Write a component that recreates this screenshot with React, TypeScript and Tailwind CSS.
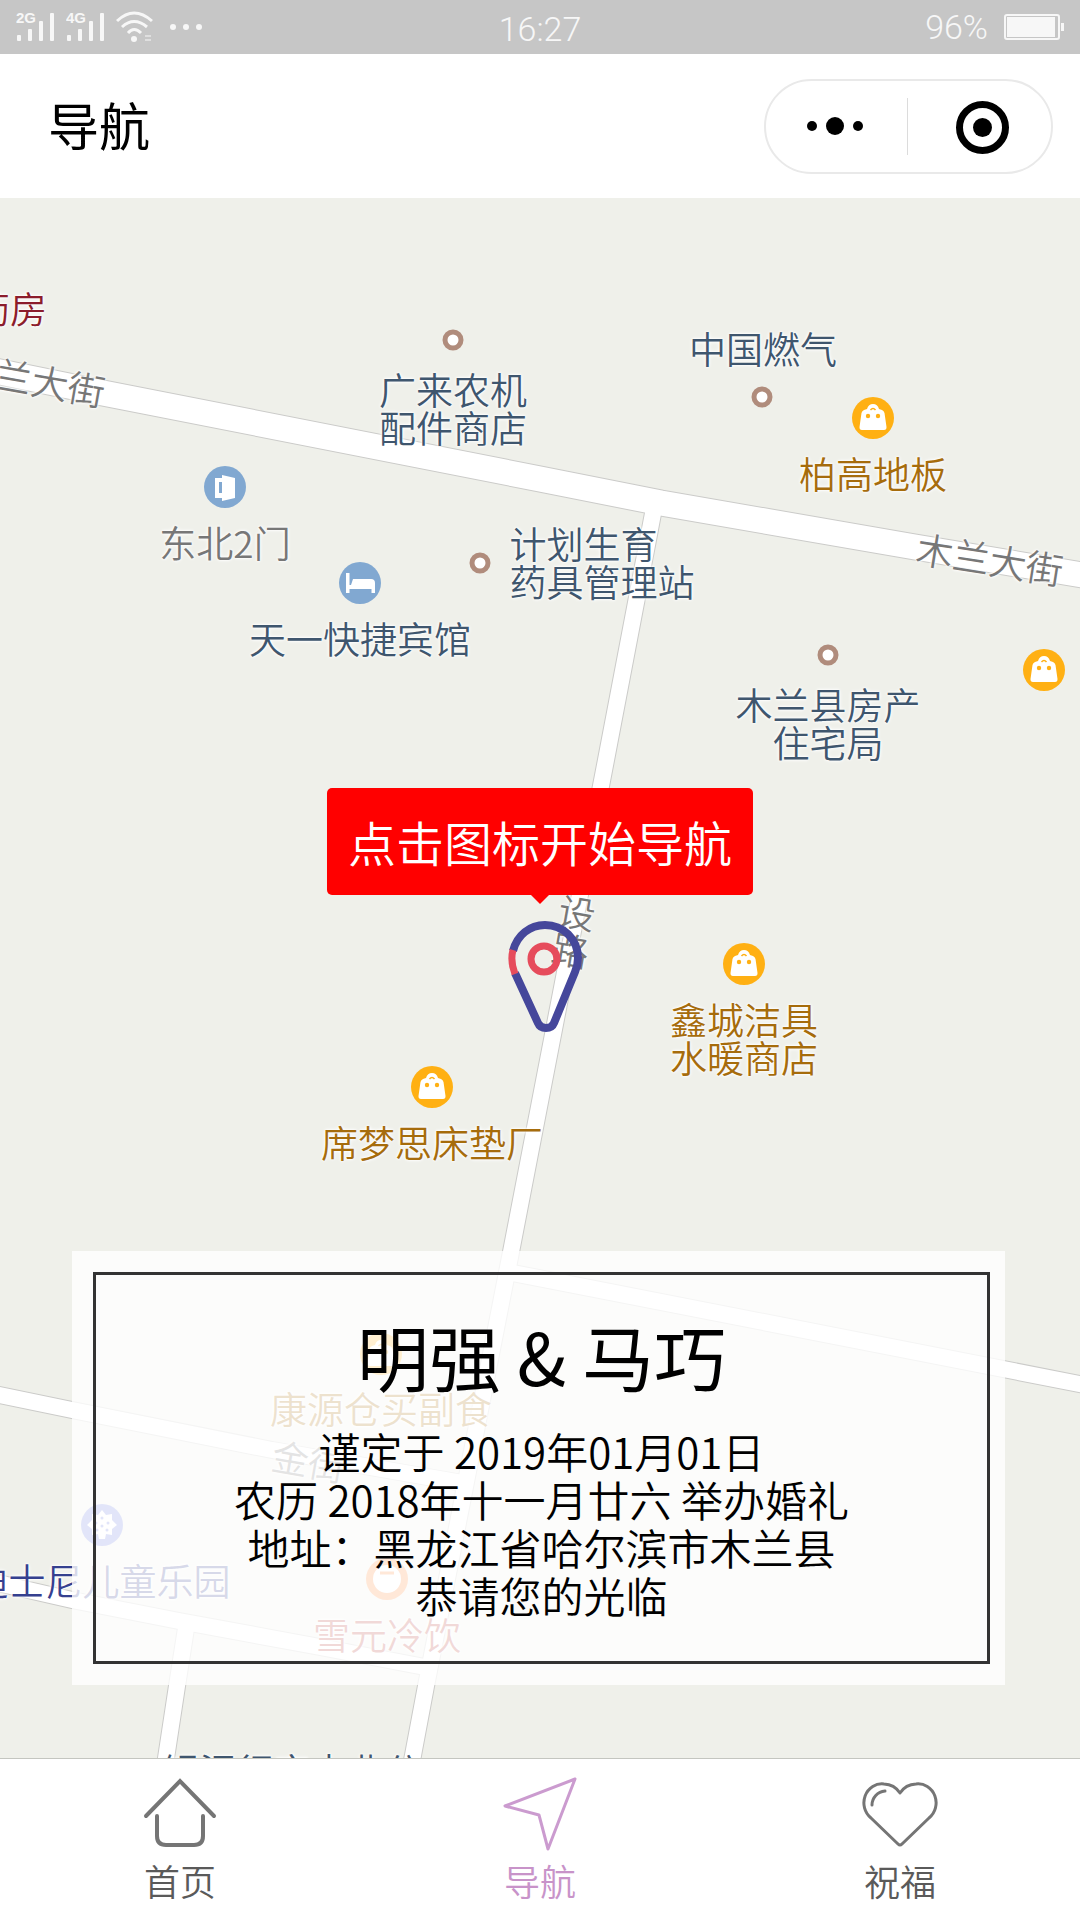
import React from "react";

type Kind = "shop" | "gate" | "hotel" | "dot" | "park" | "food";

const MARKERS: { kind: Kind; x: number; y: number }[] = [
  { kind: "dot", x: 453, y: 142 },
  { kind: "dot", x: 762, y: 199 },
  { kind: "dot", x: 480, y: 365 },
  { kind: "dot", x: 828, y: 457 },
  { kind: "gate", x: 225, y: 289 },
  { kind: "hotel", x: 360, y: 385 },
  { kind: "shop", x: 873, y: 220 },
  { kind: "shop", x: 1044, y: 472 },
  { kind: "shop", x: 744, y: 766 },
  { kind: "shop", x: 432, y: 889 },
  { kind: "shop", x: 381, y: 1156 },
  { kind: "park", x: 102, y: 1327 },
  { kind: "food", x: 387, y: 1381 },
];

const NAVY = "text-[#3f566e]";
const BROWN = "text-[#a66c0c]";
const GRAY = "text-[#777777]";

const LABELS: { lines: string[]; x: number; y: number; color: string; turn?: string; left?: boolean }[] = [
  { lines: ["药房"], x: 10, y: 110, color: "text-[#8c1d2c]" },
  { lines: ["木兰大街"], x: 32, y: 180, color: GRAY, turn: "rotate-10" },
  { lines: ["木兰大街"], x: 990, y: 360, color: GRAY, turn: "rotate-9" },
  { lines: ["广来农机", "配件商店"], x: 453, y: 210, color: NAVY },
  { lines: ["中国燃气"], x: 763, y: 150, color: NAVY },
  { lines: ["柏高地板"], x: 873, y: 275, color: BROWN },
  { lines: ["东北2门"], x: 225, y: 344, color: GRAY },
  { lines: ["计划生育", "药具管理站"], x: 602, y: 364, color: NAVY, left: true },
  { lines: ["天一快捷宾馆"], x: 360, y: 440, color: NAVY },
  { lines: ["木兰县房产", "住宅局"], x: 828, y: 525, color: NAVY },
  { lines: ["设", "路"], x: 574, y: 732, color: GRAY, turn: "rotate-10" },
  { lines: ["鑫城洁具", "水暖商店"], x: 744, y: 840, color: BROWN },
  { lines: ["席梦思床垫厂"], x: 432, y: 944, color: BROWN },
  { lines: ["康源仓买副食"], x: 381, y: 1210, color: BROWN },
  { lines: ["金街"], x: 309, y: 1262, color: GRAY, turn: "rotate-10" },
  { lines: ["迪士尼儿童乐园"], x: 101, y: 1382, color: "text-[#35408f]" },
  { lines: ["雪元冷饮"], x: 387, y: 1436, color: "text-[#b8433c]" },
  { lines: ["银泥行宾中业分"], x: 292, y: 1572, color: NAVY },
];

const ROADS: { d: string; w: number }[] = [
  { d: "M-20 170 L103 195 L540 281 L661 305 L915 349 L1100 380", w: 26 },
  { d: "M655 305 L606 562 L511 1054 L426 1488 L405 1600", w: 17 },
  { d: "M508 1074 L1100 1190", w: 17 },
  { d: "M-20 1193 L72 1212 L272 1252 L468 1286", w: 17 },
  { d: "M-20 1381 L72 1402 L179 1423 L320 1449 L430 1470", w: 17 },
  { d: "M187 1424 L177 1488 L163 1580", w: 17 },
];

function Roads() {
  return (
    <svg className="absolute left-0 top-0" width="1080" height="1600" viewBox="0 0 1080 1600" fill="none" aria-hidden="true">
      {ROADS.map((r) => (
        <path key={r.d} d={r.d} stroke="#cbcbc9" strokeWidth={r.w + 1} />
      ))}
      {ROADS.map((r) => (
        <path key={r.d} d={r.d} stroke="#ffffff" strokeWidth={r.w - 1} />
      ))}
    </svg>
  );
}

function MarkerIcon({ kind }: { kind: Kind }) {
  if (kind === "dot") {
    return (
      <svg width="44" height="44" viewBox="0 0 44 44" aria-hidden="true">
        <circle cx="22" cy="22" r="8" fill="#fff" stroke="#b08c7c" strokeWidth="5" />
      </svg>
    );
  }
  const fill = { shop: "#ffb013", gate: "#81a8d1", hotel: "#81a8d1", park: "#6f7fe0", food: "#ff8a3c" }[kind];
  return (
    <svg width="44" height="44" viewBox="0 0 44 44" aria-hidden="true">
      <circle cx="22" cy="22" r="21" fill={fill} />
      {kind === "shop" && (
        <>
          <path d="M13 14 L16 13 C17 9.500 19 8 22 8 S27 9.500 28 13 L31 14 Q33 15 33.500 17 L35.500 31 Q35.700 34 33 34 H11 Q8.300 34 8.500 31 L10.500 17 Q11 15 13 14 Z" fill="#fff" />
          <path d="M19.500 14 Q22 11 24.500 14" stroke={fill} strokeWidth="1.500" fill="none" />
          <circle cx="17" cy="20" r="2.200" fill={fill} />
          <circle cx="27" cy="20" r="2.200" fill={fill} />
        </>
      )}
      {kind === "gate" && (
        <>
          <path d="M12 13 H19 V10 L32 13 V33 L19 36 V33 H12 Z" fill="#fff" />
          <rect x="16" y="17" width="3" height="11" fill={fill} />
        </>
      )}
      {kind === "hotel" && <path d="M8 12 H11.500 V24 H13 L15 18 H33 Q37 18 37 22 V32 H33.500 V28 H11.500 V32 H8 Z" fill="#fff" />}
      {kind === "park" && (
        <>
          <path d="M22 7 L26 12 L32 11 L32 17 L37 22 L32 26 L32 32 L26 31 L25 36 H19 L18 31 L12 32 L12 26 L7 22 L12 17 L12 11 L18 12 Z" fill="#fff" />
          <g fill={fill}>
            <circle cx="22" cy="15" r="1.500" />
            <circle cx="16" cy="20" r="1.500" />
            <circle cx="28" cy="20" r="1.500" />
            <circle cx="22" cy="23" r="1.500" />
            <circle cx="17" cy="27" r="1.500" />
            <circle cx="27" cy="27" r="1.500" />
          </g>
        </>
      )}
      {kind === "food" && (
        <>
          <circle cx="22" cy="22" r="14" fill="#fff" />
          <path d="M15 16 H29" stroke={fill} strokeWidth="3" />
        </>
      )}
    </svg>
  );
}

function Pin() {
  return (
    <svg width="80" height="116" viewBox="0 0 80 116" fill="none" aria-hidden="true">
      <path d="M7 32 C11 16 24 6 39 6 C57 6 72 20 72 39 Q72 46 69 53 L48 104 Q46 109 40 109 T32 104 L9 54" stroke="#45479b" strokeWidth="8" />
      <path d="M7 31 Q4 42 9 55" stroke="#e64c5c" strokeWidth="7" />
      <circle cx="38" cy="40" r="13" stroke="#e64c5c" strokeWidth="7" />
    </svg>
  );
}

function Signal({ name }: { name: string }) {
  return (
    <svg width="40" height="44" viewBox="0 -6 40 44" aria-label={name}>
      <text x="0" y="12" fontSize="15" fontWeight="700" fontFamily="Liberation Sans, sans-serif" fill="#f7f7f7">
        {name}
      </text>
      <g fill="#f7f7f7">
        <rect x="1" y="24" width="4" height="6" rx="1" />
        <rect x="12" y="18" width="4" height="12" rx="1" />
        <rect x="23" y="10" width="4" height="20" rx="1" />
        <rect x="34" y="2" width="4" height="28" rx="1" />
      </g>
    </svg>
  );
}

function StatusBar() {
  return (
    <div className="grid h-[54px] grid-cols-3 items-center bg-[#c6c6c6] px-4 font-['Roboto','Noto_Sans',sans-serif] text-[34px] leading-none font-light text-[#f7f7f7]">
      <div className="flex items-center gap-[10px]">
        <Signal name="2G" />
        <Signal name="4G" />
        <svg width="38" height="32" viewBox="0 0 38 32" fill="none" stroke="#f7f7f7" strokeWidth="3" aria-hidden="true">
          <path d="M1 10 Q18 -6 36 10" />
          <path d="M6 16 Q18 5 31 16" />
          <path d="M12 22 Q18 15 25 22" />
          <circle cx="18" cy="28" r="3" fill="#f7f7f7" stroke="none" />
          <path d="M29 25 H35 M29 29 H35" strokeWidth="2" opacity="0.5" />
        </svg>
        <div className="flex gap-[7px] pl-[6px]">
          <span className="size-[6px] rounded-full bg-[#f7f7f7]" />
          <span className="size-[6px] rounded-full bg-[#f7f7f7]" />
          <span className="size-[6px] rounded-full bg-[#f7f7f7]" />
        </div>
      </div>
      <div className="pt-1 text-center">16:27</div>
      <div className="flex items-center justify-end gap-4">
        <span>96%</span>
        <svg width="60" height="26" viewBox="0 0 60 26" aria-hidden="true">
          <rect x="1" y="1" width="54" height="24" rx="2" fill="none" stroke="#f7f7f7" strokeWidth="2" />
          <rect x="3" y="3" width="48" height="20" fill="#f7f7f7" />
          <rect x="57" y="9" width="3" height="8" fill="#f7f7f7" />
        </svg>
      </div>
    </div>
  );
}

function Header() {
  return (
    <header className="flex h-[144px] items-center justify-between bg-white pr-[27px] pl-12">
      <h1 className="pb-1 text-[51px] leading-none text-black">导航</h1>
      <div className="flex h-[95px] w-[289px] items-center rounded-full border-2 border-[#e9e9e9]">
        <button type="button" aria-label="更多" className="flex h-full w-[141px] items-center justify-center gap-[9px] pr-[3px]">
          <span className="size-[10px] rounded-full bg-black" />
          <span className="size-[18px] rounded-full bg-black" />
          <span className="size-[10px] rounded-full bg-black" />
        </button>
        <span className="h-[57px] w-px bg-[#dcdcdc]" />
        <button type="button" aria-label="关闭" className="flex h-full flex-1 items-center justify-center pt-[2px] pl-[6px]">
          <span className="flex size-[53px] items-center justify-center rounded-full border-[7px] border-black">
            <span className="size-[19px] rounded-full bg-black" />
          </span>
        </button>
      </div>
    </header>
  );
}

function MapView() {
  return (
    <main className="relative flex-1 overflow-hidden bg-[#eff0ea]">
      <Roads />
      {MARKERS.map((m) => (
        <div key={`${m.x}-${m.y}`} className="absolute -translate-1/2" style={{ left: m.x, top: m.y }}>
          <MarkerIcon kind={m.kind} />
        </div>
      ))}
      {LABELS.map((l) => (
        <div
          key={`${l.x}-${l.y}`}
          className={`absolute -translate-1/2 text-[37px] leading-[38px] font-[350] whitespace-nowrap [text-shadow:0_0_2px_#fff,0_0_3px_#fff,0_0_4px_#fff] ${l.left ? "text-left" : "text-center"} ${l.color} ${l.turn ?? ""}`}
          style={{ left: l.x, top: l.y }}
        >
          {l.lines.map((t) => (
            <div key={t}>{t}</div>
          ))}
        </div>
      ))}
      <button type="button" aria-label="点击图标开始导航" className="absolute top-[590px] left-1/2 flex -translate-x-1/2 flex-col items-center">
        <span className="flex h-[107px] items-center rounded-[5px] bg-[#ff0000] px-[21px] pb-[2px] text-[48px] leading-none font-[350] whitespace-nowrap text-white">
          点击图标开始导航
        </span>
        <span className="size-0 border-x-[9px] border-t-[9px] border-x-transparent border-t-[#ff0000]" />
        <span className="pt-[15px] pl-[12px]">
          <Pin />
        </span>
      </button>
      <section className="absolute right-[75px] bottom-[73px] left-[72px] bg-white/80 p-[21px] pr-[15px]">
        <div className="border-3 border-[#333333] pt-[38px] pb-[42px] text-center text-black">
          <h2 className="text-[72px] leading-[84px]">明强 &amp; 马巧</h2>
          <div className="mt-[30px] text-[42px] leading-[48px] font-[350]">
            <p>谨定于 2019年01月01日</p>
            <p>农历 2018年十一月廿六 举办婚礼</p>
            <p>地址：黑龙江省哈尔滨市木兰县</p>
            <p>恭请您的光临</p>
          </div>
        </div>
      </section>
    </main>
  );
}

const TABS = [
  {
    name: "首页",
    color: "text-[#5a5a5a]",
    icon: (
      <g stroke="#757575" strokeWidth="4" strokeLinecap="round">
        <path d="M4 40 L38 5 L72 40" />
        <path d="M15 40 V60 Q15 69 24 69 H52 Q61 69 61 60 V40" />
      </g>
    ),
  },
  {
    name: "导航",
    color: "text-[#c893c9]",
    icon: <path d="M73 3 L3 30 L37 39 L46 73 Z" stroke="#cb9bcf" strokeWidth="3" strokeLinejoin="round" />,
  },
  {
    name: "祝福",
    color: "text-[#5a5a5a]",
    icon: (
      <g stroke="#757575" strokeWidth="3" strokeLinecap="round" strokeLinejoin="round">
        <path d="M38 17 A20 20 0 0 0 22 8 A18 19 0 0 0 9 42 L36 68 Q38 70 40 68 L67 42 A18 19 0 0 0 54 8 A20 20 0 0 0 38 17" />
        <path d="M10 29 A14 14 0 0 1 23 15" />
      </g>
    ),
  },
];

function TabBar() {
  return (
    <nav className="grid h-[162px] grid-cols-3 border-t border-[#c4c6c0] bg-white">
      {TABS.map((t) => (
        <a key={t.name} href="#" className={`flex flex-col items-center pt-[17px] text-[36px] leading-[36px] font-[350] ${t.color}`}>
          <svg width="76" height="76" viewBox="0 0 76 76" fill="none" aria-hidden="true">
            {t.icon}
          </svg>
          <span className="mt-[10px]">{t.name}</span>
        </a>
      ))}
    </nav>
  );
}

export default function App() {
  return (
    <div lang="zh-CN" className="flex h-screen min-h-[1200px] flex-col bg-white font-['Noto_Sans_CJK_SC',sans-serif]">
      <StatusBar />
      <Header />
      <MapView />
      <TabBar />
    </div>
  );
}
